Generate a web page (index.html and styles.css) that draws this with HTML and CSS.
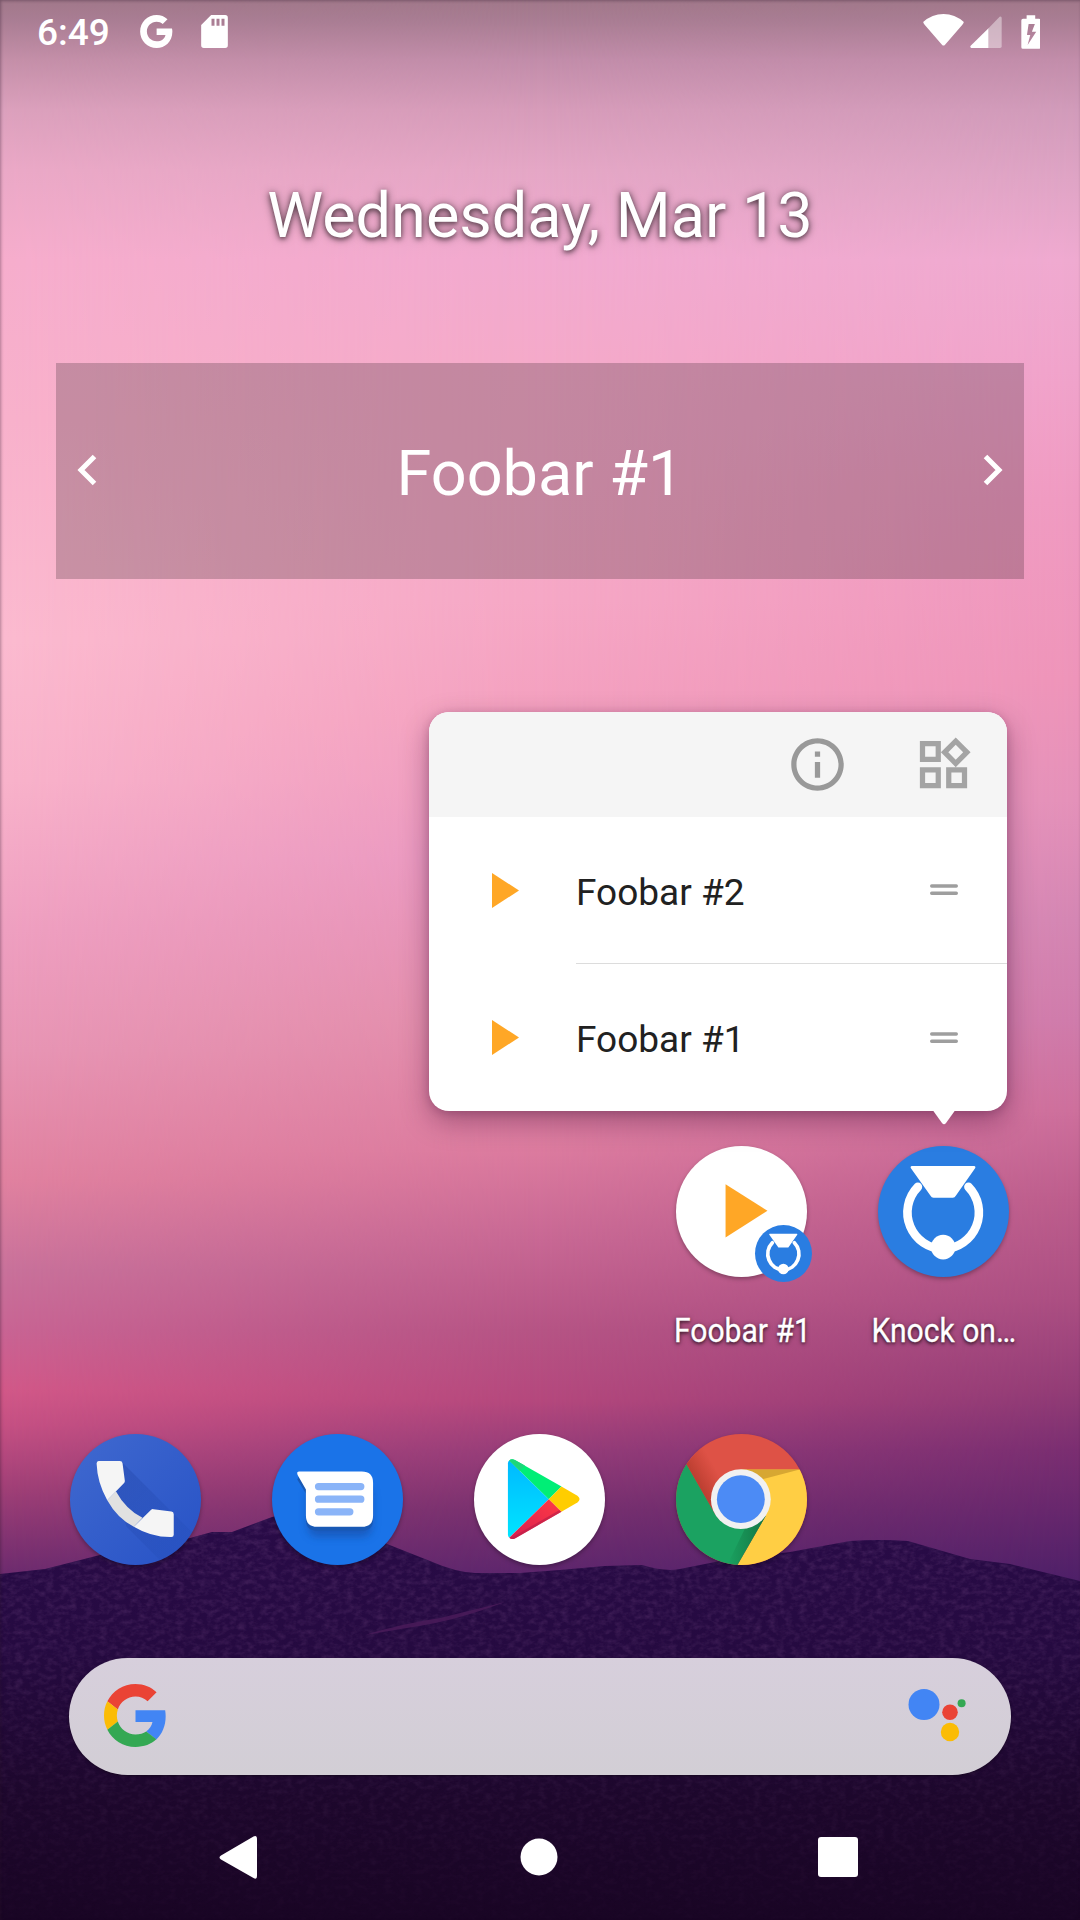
FILE: index.html
```html
<!DOCTYPE html>
<html lang="en">
<head>
<meta charset="utf-8">
<title>Home</title>
<link rel="stylesheet" href="styles.css">
</head>
<body>
<div class="screen">
  <div class="wallpaper">
    <div class="sky sky-mid"></div>
    <div class="sky sky-left"></div>
    <div class="sky sky-right"></div>
    <svg class="hills" viewBox="0 1500 1080 420">
      <defs>
        <linearGradient id="hill" x1="0" y1="0" x2="0" y2="1">
          <stop offset="0" stop-color="#290b48"/>
          <stop offset=".35" stop-color="#250a40"/>
          <stop offset=".7" stop-color="#1d072c"/>
          <stop offset="1" stop-color="#190524"/>
        </linearGradient>
        <linearGradient id="fade" x1="0" y1="0" x2="0" y2="1">
          <stop offset="0" stop-color="#fff" stop-opacity=".3"/>
          <stop offset=".4" stop-color="#fff" stop-opacity=".22"/>
          <stop offset="1" stop-color="#fff" stop-opacity=".03"/>
        </linearGradient>
        <filter id="grain" x="0" y="0" width="100%" height="100%">
          <feTurbulence type="fractalNoise" baseFrequency=".13 .2" numOctaves="3" seed="4"/>
          <feColorMatrix values="0 0 0 0 .32  0 0 0 0 .13  0 0 0 0 .36  1.6 0 0 0 -.62"/>
          <feComposite in2="SourceGraphic" operator="in"/>
        </filter>
        <mask id="grainmask"><rect y="1500" width="1080" height="420" fill="url(#fade)"/></mask>
        <path id="ridge" d="M0 1574L45 1569L100 1555L160 1543L190 1538L212 1532L232 1532L272 1517L300 1511L335 1514L387 1544L430 1561Q455 1572 475 1573L520 1573L560 1570L605 1566L642 1565Q665 1572 680 1569L720 1561L790 1552L850 1541Q880 1539 908 1541L970 1559L1010 1564L1080 1581V1920H0Z"/>
      </defs>
      <use href="#ridge" fill="url(#hill)"/>
      <g mask="url(#grainmask)"><use href="#ridge" fill="#fff" filter="url(#grain)"/></g>
      <path d="M365 1635Q400 1624 440 1618L505 1602Q460 1619 425 1625Z" fill="#4a1b59" opacity=".85"/>
    </svg>
    <div class="edge"></div>
  </div>

  <header class="status">
    <span class="clock">6:49</span>
    <svg class="st-g" viewBox="2 2 43 44"><path fill="#fff" d="M44.5 20H24v8.5h11.8C34.7 33.9 30.1 37 24 37c-7.200 0-13-5.800-13-13s5.800-13 13-13c3.100 0 5.900 1.100 8.100 2.900l6.400-6.400C34.600 4.100 29.600 2 24 2 11.800 2 2 11.800 2 24s9.800 22 22 22c11 0 21-8 21-22 0-1.300-.2-2.700-.5-4z"/></svg>
    <svg class="st-sd" viewBox="605 45 80 99"><path fill="#fff" fill-rule="evenodd" d="M635 45H677Q685 45 685 53V136Q685 144 677 144H613Q605 144 605 136V75ZM636 56V77H645V56ZM651 56V77H660V56ZM666 56V77H675V56Z"/></svg>
    <span class="spring"></span>
    <svg class="st-wifi" viewBox="133 42 122 96"><path fill="#fff" d="M133 66Q160 42 194 42T255 66Q254 71 250 75L198 135Q194 138 190 135L138 75Q134 71 133 66Z"/></svg>
    <svg class="st-cell" viewBox="272 46 95 95"><path fill="#fff" opacity=".42" d="M327 82L360 48Q366 46 366 52V136Q366 141 361 141H327Z"/><path fill="#fff" d="M327 82V141H276Q271 139 274 134Z"/></svg>
    <svg class="st-bat" viewBox="425 42 59 102"><path fill="#fff" fill-rule="evenodd" d="M442 42H468V53H479Q484 53 484 58V139Q484 144 479 144H431Q426 144 426 139V58Q426 53 431 53H442ZM448 69L443 102H453L445 132L471 92H458L467 69Z"/></svg>
  </header>

  <main class="home">
    <div class="date">Wednesday, Mar 13</div>

    <section class="widget">
      <svg class="chev" viewBox="0 0 20 32"><path d="M17.500 2.500L4 16L17.500 29.500" fill="none" stroke="#fff" stroke-width="5"/></svg>
      <span class="widget-title">Foobar #1</span>
      <svg class="chev" viewBox="0 0 20 32"><path d="M2.500 2.500L16 16L2.500 29.500" fill="none" stroke="#fff" stroke-width="5"/></svg>
    </section>

    <div class="apps">
      <div class="app">
        <svg class="icon" viewBox="108 108 394 394">
          <circle cx="305" cy="305" r="197" fill="#fff"/>
          <path d="M257 223L383 303L257 383Z" fill="#ffa726"/>
        </svg>
        <svg class="badge" viewBox="714 108 394 394"><use href="#knock"/></svg>
        <span class="label">Foobar #1</span>
      </div>
      <div class="app">
        <svg class="icon" viewBox="714 108 394 394">
          <g id="knock">
            <circle cx="911" cy="305" r="197" fill="#2a7de1"/>
            <path d="M834 231A110 110 0 0 0 911 418A110 110 0 0 0 986 231" fill="none" stroke="#fff" stroke-width="26" stroke-linecap="round"/>
            <path d="M816 168H1003Q1009 169 1006 175L948 258Q945 264 939 264H881Q875 264 872 258L813 175Q810 169 816 168Z" fill="#fff"/>
            <circle cx="910" cy="412" r="37" fill="#fff"/>
          </g>
        </svg>
        <span class="label">Knock on…</span>
      </div>
    </div>

    <div class="dock">
      <svg class="icon" viewBox="90 71 394 394">
        <defs>
          <linearGradient id="ph" x1="0" y1="0" x2="1" y2="1"><stop offset="0" stop-color="#4069cf"/><stop offset="1" stop-color="#2752c6"/></linearGradient>
          <linearGradient id="phs" x1="0" y1="0" x2="1" y2="1"><stop offset="0" stop-color="#1f3f9f" stop-opacity=".35"/><stop offset="1" stop-color="#2450bd" stop-opacity=".2"/></linearGradient>
          <clipPath id="phc"><circle cx="287" cy="268" r="197"/></clipPath>
        </defs>
        <circle cx="287" cy="268" r="197" fill="url(#ph)"/>
        <path clip-path="url(#phc)" d="M246 155L490 399L400 490L260 350L228 243L252 218Z" fill="url(#phs)"/>
        <path d="M228 243Q258 298 308 323L282 350Q232 324 202 270Z" fill="#e1e1e1"/>
        <path d="M176 152H240Q247 152 248 159L255 212Q255 216 252 219L202 270Q172 218 170 160Q170 152 176 152Z" fill="#f5f5f5"/>
        <path d="M282 350L334 299Q337 296 341 297L395 304Q402 305 402 312V374Q402 381 395 381Q335 382 282 350Z" fill="#f5f5f5"/>
      </svg>
      <svg class="icon" viewBox="696 71 394 394">
        <defs><filter id="sh" x="-20%" y="-20%" width="140%" height="160%"><feGaussianBlur stdDeviation="13"/></filter></defs>
        <circle cx="893" cy="268" r="197" fill="#1a73e8"/>
        <rect x="803" y="225" width="194" height="155" rx="30" fill="#12459a" opacity=".55" filter="url(#sh)"/>
        <path transform="translate(0 12)" d="M778 184H966Q1000 184 1000 218V318Q1000 350 966 350H832Q798 350 798 318V238L772 196Z" fill="#1859b5"/>
        <path d="M778 184H966Q1000 184 1000 218V316Q1000 350 966 350H832Q798 350 798 316V238L773 194Q769 184 778 184Z" fill="#fff"/>
        <path d="M836 229H963M836 267H963M836 305H930" stroke="#8ab4f8" stroke-width="22" stroke-linecap="round"/>
      </svg>
      <svg class="icon" viewBox="102 71 394 394">
        <defs>
          <linearGradient id="pb" x1="0" y1="0" x2="0" y2="1"><stop offset="0" stop-color="#00b9ff"/><stop offset="1" stop-color="#00e5ff"/></linearGradient>
          <linearGradient id="pr" x1="1" y1="0" x2="0" y2="1"><stop offset="0" stop-color="#ff3a44"/><stop offset="1" stop-color="#d91e50"/></linearGradient>
        </defs>
        <circle cx="299" cy="268" r="197" fill="#fff"/>
        <path d="M208 151L327 267L208 383Q204 379 204 373V160Q204 154 208 151Z" fill="url(#pb)"/>
        <path d="M208 151Q214 144 225 149L365 229L327 267Z" fill="#00ee76"/>
        <path d="M208 151Q214 144 225 149L255 166L240 182Z" fill="#1dd67a"/>
        <path d="M365 229L413 257Q426 267 413 277L365 305L327 267Z" fill="#ffcd00"/>
        <path d="M365 305L225 385Q214 390 208 383L327 267Z" fill="url(#pr)"/>
        <path d="M365 305L225 385Q214 390 210 383Q216 381 225 377L358 300Z" fill="#bd1f48" opacity=".7"/>
      </svg>
      <svg class="icon" viewBox="708 71 394 394">
        <defs>
          <clipPath id="cc"><circle cx="905" cy="268" r="197"/></clipPath>
          <linearGradient id="crs" gradientUnits="userSpaceOnUse" x1="785" y1="240" x2="845" y2="205"><stop offset="0" stop-color="#a93526" stop-opacity=".65"/><stop offset="1" stop-color="#b33426" stop-opacity="0"/></linearGradient>
          <linearGradient id="cgs" x1="0" y1="0" x2="1" y2="0"><stop offset="0" stop-color="#0f6b3b" stop-opacity="0"/><stop offset="1" stop-color="#116b3c" stop-opacity=".8"/></linearGradient>
        </defs>
        <g clip-path="url(#cc)">
          <rect x="708" y="71" width="394" height="394" fill="#de5246"/>
          <path d="M904 178H1110V480H885L893 465L978 317Z" fill="#ffce44"/>
          <path d="M739 161L826 312Q860 370 978 317L890 470H700V161Z" fill="#1ba261"/>
          <path d="M739 161L826 312L905 178L800 90Z" fill="url(#crs)"/>
          <path d="M904 178H1080L965 208Z" fill="#c99a2c" opacity=".75"/>
          <path d="M978 317L893 465H862L918 350Z" fill="url(#cgs)"/>
        </g>
        <circle cx="903" cy="267" r="90" fill="#f1f1f1"/>
        <circle cx="903" cy="267" r="72" fill="#4c8bf5"/>
      </svg>
    </div>

    <div class="search">
      <svg class="glogo" viewBox="0 0 48 48">
        <path fill="#ea4335" d="M24 9.500c3.540 0 6.710 1.220 9.210 3.600l6.850-6.850C35.900 2.380 30.470 0 24 0 14.620 0 6.510 5.380 2.560 13.220l7.980 6.190C12.430 13.720 17.740 9.500 24 9.500z"/>
        <path fill="#4285f4" d="M46.980 24.550c0-1.570-.15-3.090-.38-4.550H24v9.020h12.940c-.58 2.960-2.260 5.480-4.780 7.180l7.730 6c4.510-4.180 7.090-10.360 7.090-17.650z"/>
        <path fill="#fbbc05" d="M10.530 28.590c-.48-1.450-.76-2.990-.76-4.590s.27-3.140.76-4.590l-7.980-6.190C.92 16.460 0 20.120 0 24c0 3.880.92 7.540 2.560 10.780l7.970-6.190z"/>
        <path fill="#34a853" d="M24 48c6.480 0 11.930-2.130 15.890-5.810l-7.730-6c-2.150 1.450-4.920 2.300-8.160 2.300-6.260 0-11.570-4.220-13.470-9.910l-7.980 6.190C6.510 42.620 14.620 48 24 48z"/>
      </svg>
      <svg class="assistant" viewBox="908 1688 58 54">
        <circle cx="924" cy="1704.500" r="15.500" fill="#4285f4"/>
        <circle cx="950" cy="1712.300" r="7.800" fill="#ea4335"/>
        <circle cx="961.600" cy="1703.200" r="4" fill="#34a853"/>
        <circle cx="950" cy="1732" r="9.200" fill="#fbbc05"/>
      </svg>
    </div>
  </main>

  <nav class="nav">
    <svg viewBox="0 0 42 44"><path fill="#fff" d="M36.500 1.500Q40 0 40 4V41Q40 45 36.500 43L4 24.500Q1 22.500 4 20.500Z"/></svg>
    <svg viewBox="0 0 42 44"><circle cx="22" cy="22" r="18.500" fill="#fff"/></svg>
    <svg viewBox="0 0 42 44"><rect x="1" y="2" width="40" height="40" rx="3" fill="#fff"/></svg>
  </nav>

  <div class="popup">
    <div class="popup-head">
      <svg viewBox="0 0 24 24"><path fill="#999" d="M11 7h2v2h-2zm0 4h2v6h-2zm1-9C6.480 2 2 6.480 2 12s4.480 10 10 10 10-4.480 10-10S17.520 2 12 2zm0 18c-4.410 0-8-3.590-8-8s3.590-8 8-8 8 3.590 8 8-3.590 8-8 8z"/></svg>
      <svg viewBox="0 0 24 24"><path fill="#a4a4a4" d="M16.660 4.520l2.830 2.830-2.830 2.830-2.830-2.830 2.830-2.830M9 5v4H5V5h4m10 10v4h-4v-4h4M9 15v4H5v-4h4m7.660-13.310L11 7.340 16.660 13l5.660-5.660-5.660-5.650zM11 3H3v8h8V3zm10 10h-8v8h8v-8zm-10 0H3v8h8v-8z"/></svg>
    </div>
    <div class="shortcut">
      <svg class="play" viewBox="0 0 27 35"><path d="M0 0L27 17.500L0 35Z" fill="#ffa726"/></svg>
      <div class="shortcut-body"><span>Foobar #2</span><svg class="grip" viewBox="0 0 28 12"><path d="M1.700 2H26.300M1.700 9.300H26.300" stroke="#9e9e9e" stroke-width="3.400" stroke-linecap="round"/></svg></div>
    </div>
    <div class="shortcut">
      <svg class="play" viewBox="0 0 27 35"><path d="M0 0L27 17.500L0 35Z" fill="#ffa726"/></svg>
      <div class="shortcut-body last"><span>Foobar #1</span><svg class="grip" viewBox="0 0 28 12"><path d="M1.700 2H26.300M1.700 9.300H26.300" stroke="#9e9e9e" stroke-width="3.400" stroke-linecap="round"/></svg></div>
    </div>
    <svg class="pointer" viewBox="0 0 22 14"><path d="M0 0H22L13 12.500Q11 15 9 12.500Z" fill="#fff"/></svg>
  </div>
</div>
</body>
</html>
```
FILE: styles.css
```css
* { box-sizing: border-box; }
body { margin: 0; font-family: Roboto, "Liberation Sans", sans-serif; color: #fff; }
svg { display: block; flex: none; }

.screen { position: relative; width: 1080px; height: 1920px; overflow: hidden; display: flex; flex-direction: column; }

/* wallpaper: three vertical colour columns blended sideways, then the hills */
.wallpaper { position: absolute; inset: 0; background: #b55083; }
.sky { position: absolute; inset: 0; }
.sky-mid { background: linear-gradient(180deg, #a1788a 0, #a97d93 20px, #c28daa 60px, #d79cba 110px, #e5a7c6 170px, #f2aad0 260px, #f5aaca 360px, #f6a8c6 600px, #f4a0bf 720px, #ea97c0 860px, #e38dab 1020px, #dc7b9f 1150px, #c86894 1240px, #b65485 1330px, #b5487d 1400px, #963d79 1450px, #77306f 1510px, #5d266d 1575px); }
.sky-left { background: linear-gradient(180deg, #a1788a 0, #a97d93 20px, #c48fa8 60px, #dba0bc 110px, #eaa8c6 170px, #f6adcc 260px, #f8b1cb 420px, #fbbacf 640px, #f8b2ca 780px, #ee9fc0 930px, #e795b4 1050px, #e0819f 1180px, #c8719a 1270px, #c86493 1330px, #d15888 1390px, #c55083 1425px, #9f3f76 1490px, #6c2b6e 1575px);
  -webkit-mask-image: linear-gradient(90deg, #000, transparent 50%); mask-image: linear-gradient(90deg, #000, transparent 50%); }
.sky-right { background: linear-gradient(180deg, #a1788a 0, #a97d93 20px, #c28daa 60px, #d19bba 110px, #dfa4c5 180px, #efaad0 260px, #f0a3cb 370px, #ef9ac1 500px, #ee94b9 680px, #e491b9 800px, #d486b3 920px, #cf7bab 1020px, #cd6f9c 1110px, #bc5d8c 1200px, #ab4e82 1300px, #923c76 1390px, #7a2e71 1450px, #67276d 1510px, #4e2068 1580px);
  -webkit-mask-image: linear-gradient(90deg, transparent 50%, #000); mask-image: linear-gradient(90deg, transparent 50%, #000); }
.hills { position: absolute; left: 0; bottom: 0; width: 1080px; height: 420px; }
.edge { position: absolute; inset: 0; box-shadow: inset 1px 1px 3px rgba(40, 20, 40, .35); }

.status { position: relative; height: 63px; padding: 0 40px 0 37px; display: flex; align-items: center; }
.clock { font-size: 37px; font-weight: 500; line-height: 63px; padding-top: 2px; width: 103px; }
.st-g { width: 32.500px; height: 33px; }
.st-sd { width: 27px; height: 33px; margin-left: 28px; }
.spring { flex: 1; }
.st-wifi { width: 41px; height: 32px; margin-bottom: 3px; }
.st-cell { width: 32px; height: 32px; margin-left: 6px; }
.st-bat { width: 19.500px; height: 34px; margin-left: 19px; }

.home { position: relative; height: 1712px; padding: 0 56px; display: flex; flex-direction: column; }
.date { margin-top: 115px; height: 75px; line-height: 75px; font-size: 63px; text-align: center; text-shadow: 0 1px 8px rgba(0, 0, 0, .6), 0 2px 4px rgba(0, 0, 0, .4); }
.widget { margin-top: 110px; height: 217px; padding: 0 21px; display: flex; align-items: center; justify-content: space-between; background: rgba(0, 0, 0, .2); }
.widget-title { font-size: 63px; line-height: 74px; padding-top: 6px; }
.chev { width: 20px; height: 32px; margin-bottom: 2px; }

.apps { margin: 567px -2px 0 0; display: flex; justify-content: flex-end; gap: 36px; }
.app { position: relative; width: 166px; display: flex; flex-direction: column; align-items: center; }
.icon { width: 131px; height: 131px; filter: drop-shadow(0 2px 2px rgba(0, 0, 0, .3)); overflow: visible; }
.badge { position: absolute; left: 97px; top: 79px; width: 57px; height: 57px; overflow: visible; }
.label { margin-top: 32px; font-size: 34px; line-height: 42px; white-space: nowrap; transform: translateX(1px) scaleX(.885); -webkit-text-stroke: .3px #fff; text-shadow: 0 1px 6px rgba(0, 0, 0, .6), 0 2px 3px rgba(0, 0, 0, .4); }

.dock { margin-top: 83px; padding-left: 14px; display: flex; gap: 71px; }
.search { margin: 93px 13px 0; height: 117px; border-radius: 59px; padding: 0 45px 0 35px; display: flex; align-items: center; justify-content: space-between; background: linear-gradient(#d7cfdc, #d2ced5); box-shadow: 0 1px 3px rgba(0, 0, 0, .4); }
.glogo { width: 63px; height: 63px; margin-bottom: 3px; }
.assistant { width: 58px; height: 54px; margin-bottom: 4px; }

.nav { position: relative; height: 145px; padding: 19px 221px 0 217px; display: flex; justify-content: space-between; align-items: center; }
.nav svg { width: 42px; height: 44px; }

.popup { position: absolute; left: 429px; top: 712px; width: 578px; height: 399px; border-radius: 20px; background: #fff; color: #212121; box-shadow: 0 10px 28px rgba(60, 10, 50, .38), 0 2px 8px rgba(60, 10, 50, .2); }
.popup-head { height: 105px; border-radius: 20px 20px 0 0; background: #f5f5f5; display: flex; justify-content: flex-end; align-items: center; gap: 63px; padding-right: 32px; }
.popup-head svg { width: 63px; height: 63px; }
.shortcut { height: 147px; display: flex; align-items: center; padding-left: 63px; }
.play { width: 27px; height: 35px; }
.shortcut-body { margin-left: 57px; flex: 1; height: 147px; border-bottom: 1px solid #dcdcdc; display: flex; align-items: center; justify-content: space-between; padding-right: 49px; font-size: 37px; }
.shortcut-body.last { border-bottom: 0; }
.shortcut-body span { padding-top: 4px; }
.grip { width: 28px; height: 12px; }
.pointer { position: absolute; left: 504px; top: 398px; width: 22px; height: 15px; }
```
